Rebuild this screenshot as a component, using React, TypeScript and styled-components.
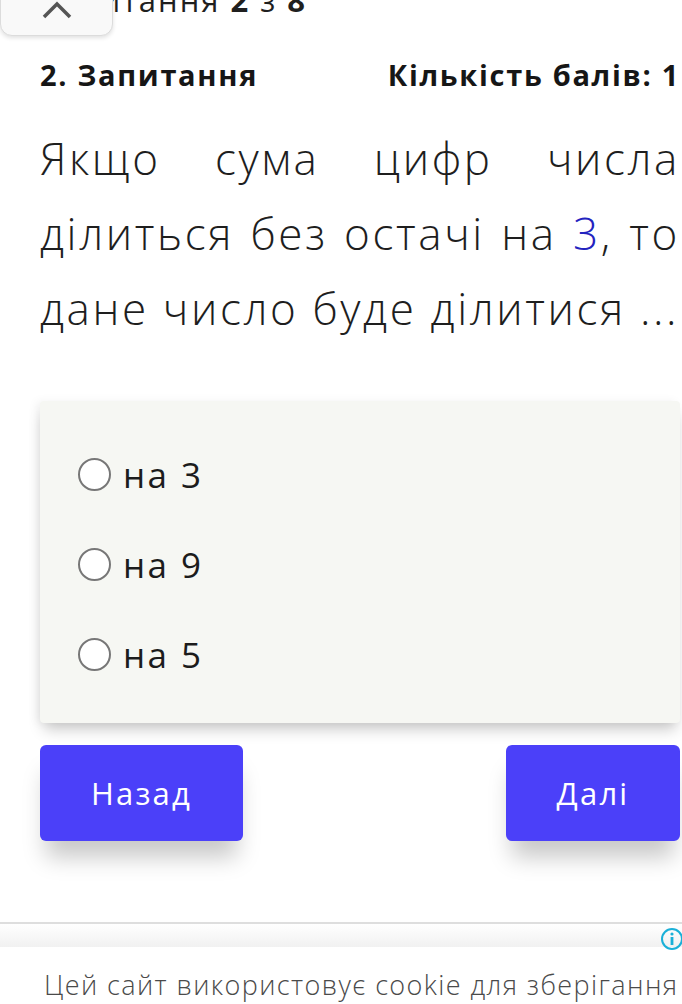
import styled, { createGlobalStyle } from "styled-components";

const GlobalStyle = createGlobalStyle`
  html, body {
    margin: 0;
    padding: 0;
    background: #ffffff;
    overflow: hidden;
  }
  body {
    font-family: "Open Sans", "Noto Sans", sans-serif;
    color: #1f1f1f;
  }
`;

const Page = styled.div`
  position: relative;
  width: 682px;
  height: 1004px;
  overflow: hidden;
`;

const Content = styled.div`
  padding: 0 2px 0 40px;
`;

const Counter = styled.div`
  margin-top: -18px;
  height: 36px;
  font-size: 31px;
  line-height: 36px;
  letter-spacing: 2px;
  color: #1f1f1f;

  b {
    font-weight: 700;
  }
`;

const TopTab = styled.button`
  position: absolute;
  top: -6px;
  left: 0;
  width: 113px;
  height: 42px;
  border: 1px solid #dcdcdc;
  border-radius: 0 0 12px 12px;
  background: #f9f9f9;
  box-shadow: 0 2px 4px rgba(0, 0, 0, 0.12);
  display: flex;
  align-items: flex-start;
  justify-content: center;
  padding: 6px 0 0;
`;

const HeadRow = styled.div`
  display: flex;
  justify-content: space-between;
  align-items: center;
  margin-top: 37px;
  height: 38px;
  font-size: 29px;
  font-weight: 700;
  letter-spacing: 1.7px;
  color: #161616;
`;

const Question = styled.div`
  margin-top: 28px;
  font-size: 44px;
  font-weight: 300;
  line-height: 75px;
  color: #1e1e1e;
  letter-spacing: 2.6px;
`;

const Line = styled.div<{ $full?: boolean }>`
  white-space: nowrap;
  text-align: ${(p) => (p.$full ? "justify" : "left")};
  text-align-last: ${(p) => (p.$full ? "justify" : "left")};
`;

const Num = styled.span`
  color: #2323bf;
`;

const AnswerCard = styled.div`
  margin-top: 55px;
  background: #f6f7f3;
  border-radius: 4px;
  padding: 57px 0 53px 38px;
  display: flex;
  flex-direction: column;
  gap: 58px;
  box-shadow: 0 10px 14px -4px rgba(0, 0, 0, 0.22), -4px 0 10px rgba(0, 0, 0, 0.05);
`;

const Option = styled.label`
  display: flex;
  align-items: center;
  height: 32px;
  font-size: 35px;
  letter-spacing: 2.4px;
  color: #1c1c1c;
`;

const Radio = styled.span`
  width: 29px;
  height: 29px;
  border: 2px solid #777777;
  border-radius: 50%;
  background: #ffffff;
  margin-right: 12px;
  flex-shrink: 0;
`;

const Nav = styled.div`
  display: flex;
  justify-content: space-between;
  margin-top: 22px;
`;

const NavButton = styled.button<{ $w: number }>`
  width: ${(p) => p.$w}px;
  height: 96px;
  border: none;
  border-radius: 6px;
  background: #4b40f9;
  color: #ffffff;
  font-family: "Open Sans", "Noto Sans", sans-serif;
  font-size: 31px;
  letter-spacing: 2.2px;
  box-shadow: 0 22px 22px -6px rgba(0, 0, 0, 0.22);
`;

const AdBar = styled.div`
  margin-top: 81px;
  height: 20px;
  border-top: 2px solid #dedede;
  background: linear-gradient(#ffffff, #f1f1f1);
  display: flex;
  justify-content: flex-end;
  align-items: flex-start;
  padding-top: 3px;
`;

const Cookie = styled.div`
  margin-top: 19px;
  padding-left: 44px;
  font-size: 27px;
  font-weight: 300;
  letter-spacing: 1.4px;
  color: #4a4a4a;
  white-space: nowrap;
`;

export default function App() {
  return (
    <Page>
      <GlobalStyle />
      <Content>
        <Counter>
          Запитання <b>2</b> з <b>8</b>
        </Counter>
        <HeadRow>
          <span>2. Запитання</span>
          <span>Кількість балів: 1</span>
        </HeadRow>
        <Question>
          <Line $full>Якщо сума цифр числа</Line>
          <Line $full>
            ділиться без остачі на <Num>3</Num>, то
          </Line>
          <Line>дане число буде ділитися ...</Line>
        </Question>
        <AnswerCard>
          {["на 3", "на 9", "на 5"].map((t) => (
            <Option key={t}>
              <Radio />
              {t}
            </Option>
          ))}
        </AnswerCard>
        <Nav>
          <NavButton $w={203}>Назад</NavButton>
          <NavButton $w={174}>Далі</NavButton>
        </Nav>
      </Content>
      <TopTab aria-label="Згорнути">
        <svg width="30" height="18" viewBox="0 0 30 18">
          <path d="M2 16 L15 3 L28 16" fill="none" stroke="#555" strokeWidth="3.5" />
        </svg>
      </TopTab>
      <AdBar>
        <svg width="24" height="24" viewBox="0 0 24 24" style={{ marginRight: -2 }}>
          <circle cx="12" cy="12" r="10" fill="none" stroke="#1ab0d8" strokeWidth="2" />
          <circle cx="12" cy="7" r="1.6" fill="#1ab0d8" />
          <rect x="10.6" y="10" width="2.8" height="8" fill="#1ab0d8" />
        </svg>
      </AdBar>
      <Cookie>Цей сайт використовує cookie для зберігання</Cookie>
    </Page>
  );
}
